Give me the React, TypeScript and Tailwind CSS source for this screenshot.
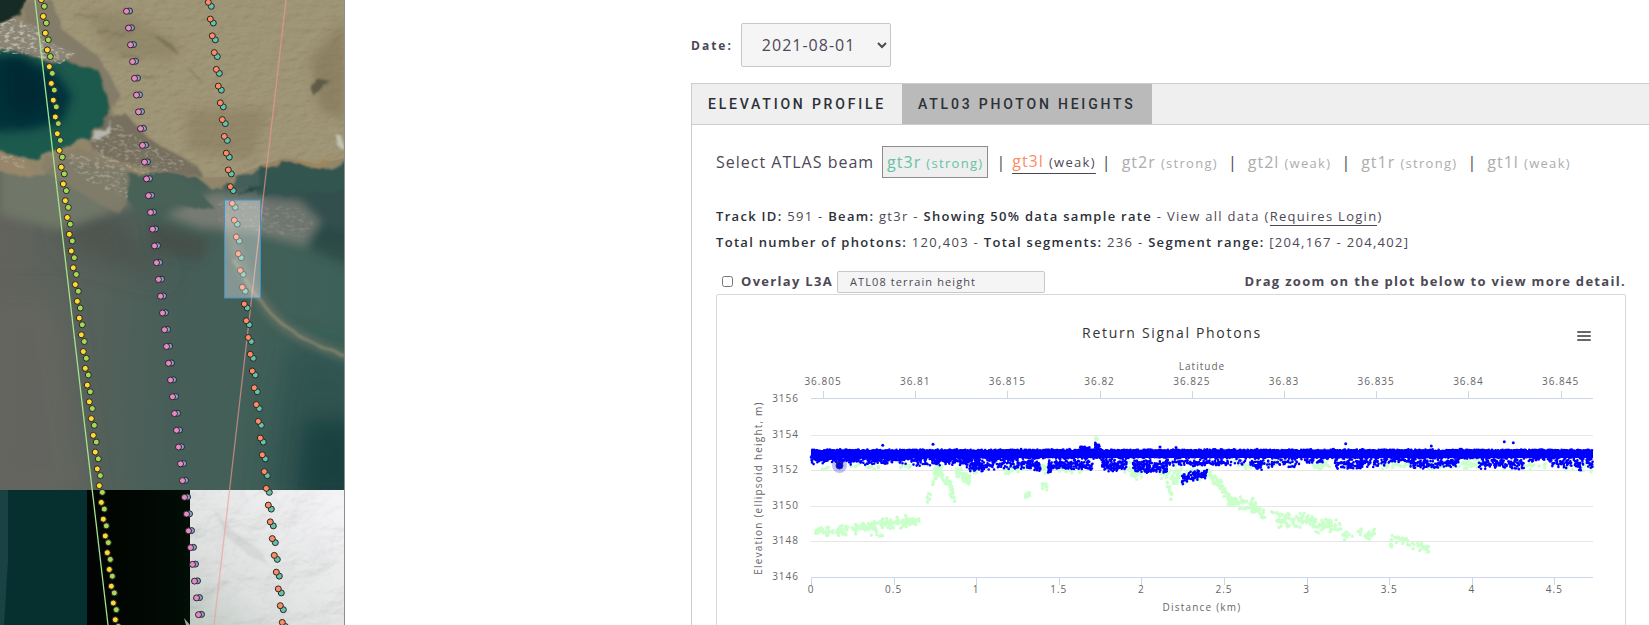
import React from "react";

/* ---------- deterministic scatter helpers ---------- */

function makeRandom(seed: number) {
  let s = seed;
  return () => {
    s = (s * 1664525 + 1013904223) % 4294967296;
    return s / 4294967296;
  };
}

// x start, x end, y at start, y at end, vertical spread, number of points
type Cluster = [number, number, number, number, number, number];

function scatter(clusters: Cluster[], seed: number) {
  const rnd = makeRandom(seed);
  let d = "";
  for (const [x0, x1, y0, y1, spread, n] of clusters) {
    for (let i = 0; i < n; i++) {
      const t = rnd();
      const x = x0 + (x1 - x0) * t;
      const y = y0 + (y1 - y0) * t + (rnd() + rnd() - 1) * spread;
      d += `M${x.toFixed(1)} ${y.toFixed(1)}h0`;
    }
  }
  return d;
}

const photons: Cluster[] = [
  [95, 875, 155.5, 155.5, 1, 900],
  [95, 875, 156.5, 156.5, 2.6, 1000],
  [95, 875, 162, 162, 2, 900],
  [94, 300, 163, 164, 3, 350],
  [94, 112, 166, 164, 4, 30],
  [112, 165, 165, 167, 5, 50],
  [150, 190, 166, 165, 5, 40],
  [193, 250, 168, 166, 5, 80],
  [246, 268, 166, 171, 6, 60],
  [252, 302, 171, 167, 7, 110],
  [303, 324, 167, 172, 7, 80],
  [331, 366, 170, 170, 6, 130],
  [331, 334, 176, 174, 4, 14],
  [362, 376, 169, 170, 7, 35],
  [363, 375, 153, 153, 2, 40],
  [378, 384, 150, 155, 4, 45],
  [382, 388, 157, 172, 3, 16],
  [385, 410, 171, 170, 7, 110],
  [416, 450, 171, 172, 7, 160],
  [448, 480, 167, 168, 4, 60],
  [480, 528, 168, 167, 4, 70],
  [465, 490, 184, 178, 6, 90],
  [476, 480, 177, 180, 3, 14],
  [533, 545, 168, 171, 5, 45],
  [545, 582, 168, 167, 6, 50],
  [582, 606, 166, 166, 3, 26],
  [618, 646, 169, 169, 6, 85],
  [646, 672, 168, 166, 5, 45],
  [672, 693, 165, 165, 2, 26],
  [693, 716, 167, 170, 6, 80],
  [716, 742, 169, 167, 5, 60],
  [761, 784, 169, 168, 6, 60],
  [784, 808, 169, 170, 6, 60],
  [808, 835, 165, 165, 3, 24],
  [835, 876, 168, 168, 6, 90],
  [860, 864, 170, 172, 5, 16],
];

const outliers: [number, number][] = [
  [165.7, 150.3], [216, 149.3], [628.7, 148.7], [714.3, 151],
  [787.3, 146.7], [796.3, 147.7], [459, 152.5], [443, 152],
];

const background: Cluster[] = [
  [98, 123, 236, 237, 6, 40],
  [123, 161, 236, 231, 6, 70],
  [163, 202, 229, 226, 7, 85],
  [152, 167, 241, 240, 2, 5],
  [210, 214, 204, 198, 6, 7],
  [214, 220, 195, 180, 5, 9],
  [217, 225, 176, 175, 6, 40],
  [225, 236, 181, 193, 5, 24],
  [233, 238, 196, 204, 5, 11],
  [239, 253, 176, 186, 7, 50],
  [105, 112, 173, 173, 2, 4],
  [133, 164, 171, 172, 3, 12],
  [178, 200, 171, 172, 3, 8],
  [252, 262, 176, 176, 3, 5],
  [288, 302, 175, 173, 7, 26],
  [302, 313, 176, 170, 3, 7],
  [307, 313, 200, 201, 4, 8],
  [324, 330, 172, 175, 5, 8],
  [325, 330, 190, 192, 5, 10],
  [331, 366, 174, 176, 7, 12],
  [377, 381, 144, 144, 2, 6],
  [407, 430, 174, 177, 10, 30],
  [413, 422, 176, 180, 6, 10],
  [443, 484, 178, 178, 8, 60],
  [450, 455, 188, 202, 7, 14],
  [455, 470, 186, 182, 8, 26],
  [489, 505, 177, 191, 7, 45],
  [505, 514, 193, 206, 6, 25],
  [511, 540, 206, 211, 8, 60],
  [534, 548, 211, 219, 9, 22],
  [552, 561, 218, 216, 2, 4],
  [559, 583, 224, 227, 9, 40],
  [583, 600, 222, 227, 7, 32],
  [596, 624, 231, 231, 8, 54],
  [622, 636, 240, 241, 6, 13],
  [641, 645, 238, 238, 6, 7],
  [648, 660, 241, 238, 6, 20],
  [673, 694, 243, 246, 6, 24],
  [673, 676, 250, 251, 2, 5],
  [695, 713, 251, 253, 5, 22],
  [517, 580, 169, 170, 6, 26],
  [596, 614, 171, 168, 5, 22],
  [664, 697, 170, 168, 4, 30],
  [710, 764, 171, 168, 5, 66],
  [785, 876, 170, 173, 6, 30],
];

const photonPath = scatter(photons, 7);
const backgroundPath = scatter(background, 23);

const latitudes = ["36.805", "36.81", "36.815", "36.82", "36.825", "36.83", "36.835", "36.84", "36.845"];
const distances = ["0", "0.5", "1", "1.5", "2", "2.5", "3", "3.5", "4", "4.5"];
const elevations = [3156, 3154, 3152, 3150, 3148, 3146];

function PhotonChart() {
  return (
    <svg
      viewBox="0 0 908 400"
      className="block w-full font-['Open_Sans','Noto_Sans',sans-serif] tracking-[1px]"
      role="img"
      aria-label="Return Signal Photons"
    >
      <text x="455" y="43" textAnchor="middle" className="fill-[#333333] text-[14px] tracking-[0.12em]">
        Return Signal Photons
      </text>
      <text x="485" y="75" textAnchor="middle" className="fill-[#666666] text-[10px]">
        Latitude
      </text>
      {elevations.slice(1, 5).map((v) => (
        <path key={v} d={`M94 ${Math.round(104 + (3156 - v) * 17.8) + 0.5}H876`} stroke="#e6e6e6" />
      ))}
      <path d="M94 103.5H876M94 282.5H876" stroke="#ccd6eb" />
      {latitudes.map((l, i) => (
        <g key={l}>
          <path d={`M${Math.round(106 + i * 92.2) + 0.5} 96V103`} stroke="#ccd6eb" />
          <text x={106 + i * 92.2} y="90" textAnchor="middle" className="fill-[#666666] text-[10px]">
            {l}
          </text>
        </g>
      ))}
      {distances.map((l, i) => (
        <g key={l}>
          <path d={`M${Math.round(94 + i * 82.6) + 0.5} 283V290`} stroke="#ccd6eb" />
          <text x={94 + i * 82.6} y="298" textAnchor="middle" className="fill-[#666666] text-[10px]">
            {l}
          </text>
        </g>
      ))}
      {elevations.map((v) => (
        <text key={v} x="82" y={107 + (3156 - v) * 17.8} textAnchor="end" className="fill-[#666666] text-[10px]">
          {v}
        </text>
      ))}
      <text transform="translate(45 193) rotate(-90)" textAnchor="middle" className="fill-[#666666] text-[10px] tracking-[0.12em]">
        Elevation (ellipsoid height, m)
      </text>
      <text x="485" y="316" textAnchor="middle" className="fill-[#666666] text-[10px] tracking-[0.12em]">
        Distance (km)
      </text>
      <path d={backgroundPath} stroke="#c9ffc9" strokeWidth="3.4" strokeLinecap="round" fill="none" />
      <rect x="94" y="155" width="782" height="8" fill="#0000ff" />
      <path d={photonPath} stroke="#0000ff" strokeWidth="2.6" strokeLinecap="round" fill="none" />
      {outliers.map(([x, y]) => (
        <circle key={x} cx={x} cy={y} r="1.5" fill="#0000ff" />
      ))}
      <circle cx="122.5" cy="170.5" r="7.5" fill="#0000ff" fillOpacity="0.25" />
      <circle cx="122.5" cy="170.5" r="3.5" fill="#0000ff" stroke="#33335a" />
    </svg>
  );
}

/* ---------- map ---------- */

function track(x0: number, y0: number, n: number) {
  return Array.from({ length: n }, (_, i) => [x0 + i * 2, y0 + i * 16.76] as const);
}

function Track({ x, y, n, color }: { x: number; y: number; n: number; color: string }) {
  return (
    <g fill={color} stroke="#26262a" strokeWidth="1">
      {track(x, y, n).map(([cx, cy]) => (
        <circle key={cy} cx={cx} cy={cy} r="3" />
      ))}
    </g>
  );
}

function MapPane() {
  return (
    <svg
      viewBox="0 0 345 625"
      preserveAspectRatio="xMinYMin slice"
      className="block h-full w-full"
      role="img"
      aria-label="Ground track map"
    >
      <defs>
        <filter id="soft" x="-20%" y="-20%" width="140%" height="140%">
          <feGaussianBlur stdDeviation="5" />
        </filter>
        <filter id="haze" x="-30%" y="-30%" width="160%" height="160%">
          <feGaussianBlur stdDeviation="13" />
        </filter>
        <filter id="edge" x="-20%" y="-20%" width="140%" height="140%">
          <feTurbulence type="fractalNoise" baseFrequency="0.07" numOctaves="3" seed="4" result="n" />
          <feDisplacementMap in="SourceGraphic" in2="n" scale="10" />
          <feGaussianBlur stdDeviation="1.2" />
        </filter>
        <filter id="dunes" x="0" y="0" width="100%" height="100%">
          <feTurbulence type="fractalNoise" baseFrequency="0.09 0.16" numOctaves="4" seed="8" result="n" />
          <feDiffuseLighting in="n" surfaceScale="2" lightingColor="#ffffff" result="l">
            <feDistantLight azimuth="225" elevation="52" />
          </feDiffuseLighting>
          <feComposite in="l" in2="SourceGraphic" operator="in" />
        </filter>
        <filter id="speckle" x="-5%" y="-5%" width="110%" height="110%">
          <feTurbulence type="fractalNoise" baseFrequency="0.2 0.32" numOctaves="2" seed="3" result="n" />
          <feColorMatrix in="n" type="matrix" values="0 0 0 0 0.72  0 0 0 0 0.68  0 0 0 0 0.6  0 4 0 0 -1.9" result="c" />
          <feComposite in="c" in2="SourceGraphic" operator="in" result="s" />
          <feGaussianBlur in="s" stdDeviation="0.7" />
        </filter>
        <filter id="snow" x="0" y="0" width="100%" height="100%">
          <feTurbulence type="fractalNoise" baseFrequency="0.02 0.03" numOctaves="5" seed="12" result="n" />
          <feDiffuseLighting in="n" surfaceScale="7" lightingColor="#ffffff">
            <feDistantLight azimuth="225" elevation="68" />
          </feDiffuseLighting>
        </filter>
        <linearGradient id="sea" x1="0" x2="1" y1="0.2" y2="0.3">
          <stop offset="0" stopColor="#64635d" />
          <stop offset="0.3" stopColor="#56615b" />
          <stop offset="0.55" stopColor="#465e58" />
          <stop offset="1" stopColor="#3d6158" />
        </linearGradient>
        <linearGradient id="night" x1="0" x2="1">
          <stop offset="0" stopColor="#010402" />
          <stop offset="0.5" stopColor="#010703" />
          <stop offset="1" stopColor="#020e07" />
        </linearGradient>
        <linearGradient id="ice" x1="0" x2="1" y1="1" y2="0">
          <stop offset="0" stopColor="#bfcac2" />
          <stop offset="0.3" stopColor="#dfe0e0" />
          <stop offset="1" stopColor="#f6f6f8" />
        </linearGradient>
      </defs>

      <rect width="345" height="625" fill="url(#sea)" />
      <g filter="url(#haze)">
        <path d="M290 340L365 360V500H265L275 420Z" fill="#284c4c" opacity="0.6" />
        <path d="M305 420H370V510H295Z" fill="#143c3c" opacity="0.8" />
        <path d="M-20 300H60L90 500H-20Z" fill="#676560" opacity="0.8" />
        <path d="M60 220L110 210L170 280L70 250Z" fill="#4c534c" opacity="0.8" />
      </g>
      <g filter="url(#soft)">
        <path d="M0 160H140L150 200L60 230L0 215Z" fill="#6f7768" />
        <path d="M120 175L205 175L230 215L150 225L130 200Z" fill="#466057" />
        <path d="M150 220L210 240L200 262L150 250Z" fill="#43493f" opacity="0.6" />
        <path d="M262 170H360V245L300 240L265 215Z" fill="#33504e" />
        <path d="M320 225L360 235V270L310 250Z" fill="#2b4744" opacity="0.8" />
      </g>
      <path d="M165 215L215 192L300 200L322 222L305 246L250 232L200 228Z" fill="#978e86" opacity="0.6" filter="url(#soft)" />
      <path d="M228 215C236 262 255 300 282 325C303 340 324 349 350 358" fill="none" stroke="#a29378" strokeWidth="6" opacity="0.55" filter="url(#soft)" />
      <path d="M236 262C252 292 268 314 284 325C303 340 324 349 350 358" fill="none" stroke="#a8977c" strokeWidth="3" opacity="0.5" filter="url(#edge)" />

      <g filter="url(#edge)">
        <path d="M-10 -10H355V162L322 170L285 162L262 168L235 181L212 190L198 178L172 172L142 178L126 170L60 158L40 175L20 165L-10 150Z" fill="#92866a" />
        <path d="M44 158L78 148L126 165L131 190L120 214L92 200L58 178L42 170Z" fill="#857d6b" opacity="0.7" />
        <path d="M-10 150L16 152L34 172L22 178L-10 168Z" fill="#97866b" />
        <path d="M130 175L172 172L198 190L214 208L160 204L140 214L128 200Z" fill="#486259" />
        <path d="M262 168L290 162L320 168L355 166V190L258 196Z" fill="#33544f" />
      </g>
      <path d="M0 0H345V158L318 164L285 158L262 165L235 176L205 178L110 120L60 30L40 0Z" fill="#ffffff" filter="url(#dunes)" opacity="0.14" className="mix-blend-overlay" />
      <g filter="url(#soft)">
        <path d="M187 110H270L250 160L188 150Z" fill="#7b6d50" opacity="0.35" />
        <path d="M85 10L130 15L180 45L170 60L110 55Z" fill="#7c7254" opacity="0.35" />
        <path d="M310 60L345 20V120L320 110Z" fill="#796d50" opacity="0.5" />
      </g>
      <g filter="url(#edge)">
        <path d="M30 0H52L62 30L98 56L120 95L112 118L92 90L66 66L40 45L24 20Z" fill="#837b68" />
        <path d="M-10 -10H30L22 14L-4 28Z" fill="#122c26" />
        <path d="M-10 28L14 18L36 26L44 40L76 54L60 64L28 54L-10 54Z" fill="#8b8575" />
        <path d="M-10 50L14 51L44 60L76 63L98 70L106 92L113 112L100 130L84 140L56 150L30 160L-10 148Z" fill="#1d5a4d" />
        <path d="M108 118L124 112L150 140L196 165L205 178L170 172L132 166L92 150L88 140Z" fill="#77705f" />
      </g>
      <path d="M-10 56L20 56L56 72L72 96L62 122L30 130L-10 132Z" fill="#04303a" filter="url(#soft)" />
      <path d="M4 60L22 58L44 80L50 105L20 118L4 100Z" fill="#022831" opacity="0.7" filter="url(#soft)" />
      <path d="M-10 28L14 18L36 26L44 40L76 54L60 64L28 54L-10 54Z" filter="url(#speckle)" opacity="0.6" />
      <path d="M90 138L118 124L150 145L196 166L150 176L96 160ZM60 150L126 168L128 200L80 178ZM0 152L24 160L30 172L0 160Z" filter="url(#speckle)" opacity="0.3" />
      <path d="M218 200L300 208L314 222L304 238L250 230L218 222Z" filter="url(#speckle)" opacity="0.14" />
      <g filter="url(#edge)">
        <path d="M90 138L106 128L111 120L109 132L98 140Z" fill="#b6b8ae" />
        <path d="M335 134L342 136L345 150L337 145Z" fill="#c4c2b4" />
        <path d="M310 84L330 80L322 92L312 94Z" fill="#51503e" opacity="0.8" />
        <path d="M152 34L172 44L180 56L168 48Z" fill="#5c5641" opacity="0.4" />
        <path d="M98 32L135 34M122 55L140 58M140 76L160 78M190 70L204 84M75 16L100 18" stroke="#4d4a38" strokeWidth="1" opacity="0.5" />
        <path d="M262 165L290 160L320 166L345 150" fill="none" stroke="#a18759" strokeWidth="2" />
        <path d="M236 192L262 188" stroke="#243c3c" strokeWidth="2" />
      </g>

      <rect x="0" y="490" width="87" height="135" fill="#06302f" />
      <path d="M0 490H8V560L4 625H0Z" fill="#1a4245" />
      <rect x="87" y="490" width="104" height="135" fill="url(#night)" />
      <rect x="190" y="490" width="155" height="135" fill="url(#ice)" />
      <rect x="190" y="490" width="155" height="135" filter="url(#snow)" opacity="0.3" className="mix-blend-multiply" />
      <path d="M215 510L232 530L262 552L268 565L250 556L225 535Z" fill="#b9babb" opacity="0.3" filter="url(#edge)" />
      <path d="M184 618L190 625H186Z" fill="#9ab0a4" />

      <path d="M35 0L108 625" stroke="#a3e38a" strokeWidth="1.3" />
      <path d="M286 0L214 625" stroke="#f39a95" strokeWidth="1.3" opacity="0.65" />

      <Track x={129.5} y={11} n={37} color="#8da0cb" />
      <Track x={126.5} y={11.3} n={37} color="#e78ac3" />
      <Track x={44.3} y={6.3} n={38} color="#a6d854" />
      <Track x={41.3} y={-0.4} n={38} color="#ffd92f" />
      <Track x={211.3} y={6.3} n={38} color="#66c2a5" />
      <Track x={208.3} y={2.3} n={38} color="#fc8d62" />

      <rect x="224.5" y="200" width="36" height="98" fill="#ffffff" fillOpacity="0.35" stroke="#3b94c8" />
    </svg>
  );
}

/* ---------- page ---------- */

const fadedBeams = [
  { name: "gt2r", kind: "(strong)" },
  { name: "gt2l", kind: "(weak)" },
  { name: "gt1r", kind: "(strong)" },
  { name: "gt1l", kind: "(weak)" },
];

export default function App() {
  return (
    <main className="grid h-screen grid-cols-[345fr_346fr_958fr] grid-rows-[minmax(0,1fr)] overflow-hidden bg-white font-['Open_Sans','Noto_Sans',sans-serif] tracking-[1px] text-[#4d4855]">
      <div className="min-h-0 overflow-hidden border-r border-[#8c8c8c]">
        <MapPane />
      </div>
      <div />
      <div className="min-w-0 whitespace-nowrap pt-[23px]">
        <div className="flex items-center gap-2">
          <label htmlFor="date" className="pt-0.5 text-[12px] font-bold tracking-[2px]">
            Date:
          </label>
          <select
            id="date"
            className="h-11 w-[150px] rounded-xs border border-[#c8c8c8] bg-[#f5f5f5] pl-4 text-[16px] tracking-[1px] text-[#4d4855]"
          >
            <option>2021-08-01</option>
          </select>
        </div>

        <div role="tablist" className="mt-4 flex h-[42px] border border-r-0 border-[#cccccc] bg-[#efefef] font-[Roboto,sans-serif] text-[14px] font-medium tracking-[0.2em] text-[#2c3038]">
          <button role="tab" aria-selected="false" className="px-4">
            ELEVATION PROFILE
          </button>
          <button role="tab" aria-selected="true" className="bg-[#bababa] px-4">
            ATL03 PHOTON HEIGHTS
          </button>
        </div>

        <section className="border-l border-[#cccccc] pt-[21px] pr-[23px] pl-6">
          <div className="flex h-8 items-center text-[16px]">
            <span className="mr-2">Select ATLAS beam</span>
            <a href="#gt3r" className="flex h-8 items-center border border-[#8c8c8c] bg-[#efefef] px-1 text-[#66c2a5]">
              <span>
                gt3r <span className="text-[13px] tracking-widest">(strong)</span>
              </span>
            </a>
            <span className="mr-1.5 ml-2">|</span>
            <a href="#gt3l" className="border-b border-[#4d4855] leading-[21px] text-[#fc8d62]">
              gt3l <span className="text-[13px] tracking-widest text-[#4d4855]">(weak)</span>
            </a>
            {fadedBeams.map((b) => (
              <React.Fragment key={b.name}>
                <span className="mx-1.5">|</span>
                <span className="px-1 text-[#adadad]">
                  {b.name} <span className="text-[13px] tracking-widest">{b.kind}</span>
                </span>
              </React.Fragment>
            ))}
          </div>

          <div className="mt-[25px] text-[13px] leading-[26px] tracking-widest [&_b]:font-semibold [&_b]:text-[#2c3038]">
            <p>
              <b>Track ID:</b> 591 - <b>Beam:</b> gt3r - <b>Showing 50% data sample rate</b> - View all data (
              <a href="#login" className="border-b border-[#4d4855]">Requires Login</a>)
            </p>
            <p>
              <b>Total number of photons:</b> 120,403 - <b>Total segments:</b> 236 - <b>Segment range:</b> [204,167 - 204,402]
            </p>
          </div>

          <div className="mt-[15px] flex h-6 items-center text-[13px] font-bold tracking-widest">
            <input id="overlay" type="checkbox" className="mr-2 mb-0.5 ml-1.5 size-[11px]" />
            <label htmlFor="overlay" className="mr-1">
              Overlay L3A
            </label>
            <select
              aria-label="Overlay product"
              className="h-[22px] w-52 appearance-none rounded-xs border border-[#c8c8c8] bg-[#f5f5f5] px-3 text-[11px] font-normal tracking-widest"
            >
              <option>ATL08 terrain height</option>
            </select>
            <span className="ml-auto">Drag zoom on the plot below to view more detail.</span>
          </div>

          <div className="relative rounded-xs border border-[#d8d8d8]">
            <PhotonChart />
            <button aria-label="Chart menu" className="absolute top-[33px] right-[33px] flex h-4 w-4 flex-col items-center justify-center gap-[2px]">
              <span className="h-[2px] w-[14px] rounded-full bg-[#666666]" />
              <span className="h-[2px] w-[14px] rounded-full bg-[#666666]" />
              <span className="h-[2px] w-[14px] rounded-full bg-[#666666]" />
            </button>
          </div>
        </section>
      </div>
    </main>
  );
}
